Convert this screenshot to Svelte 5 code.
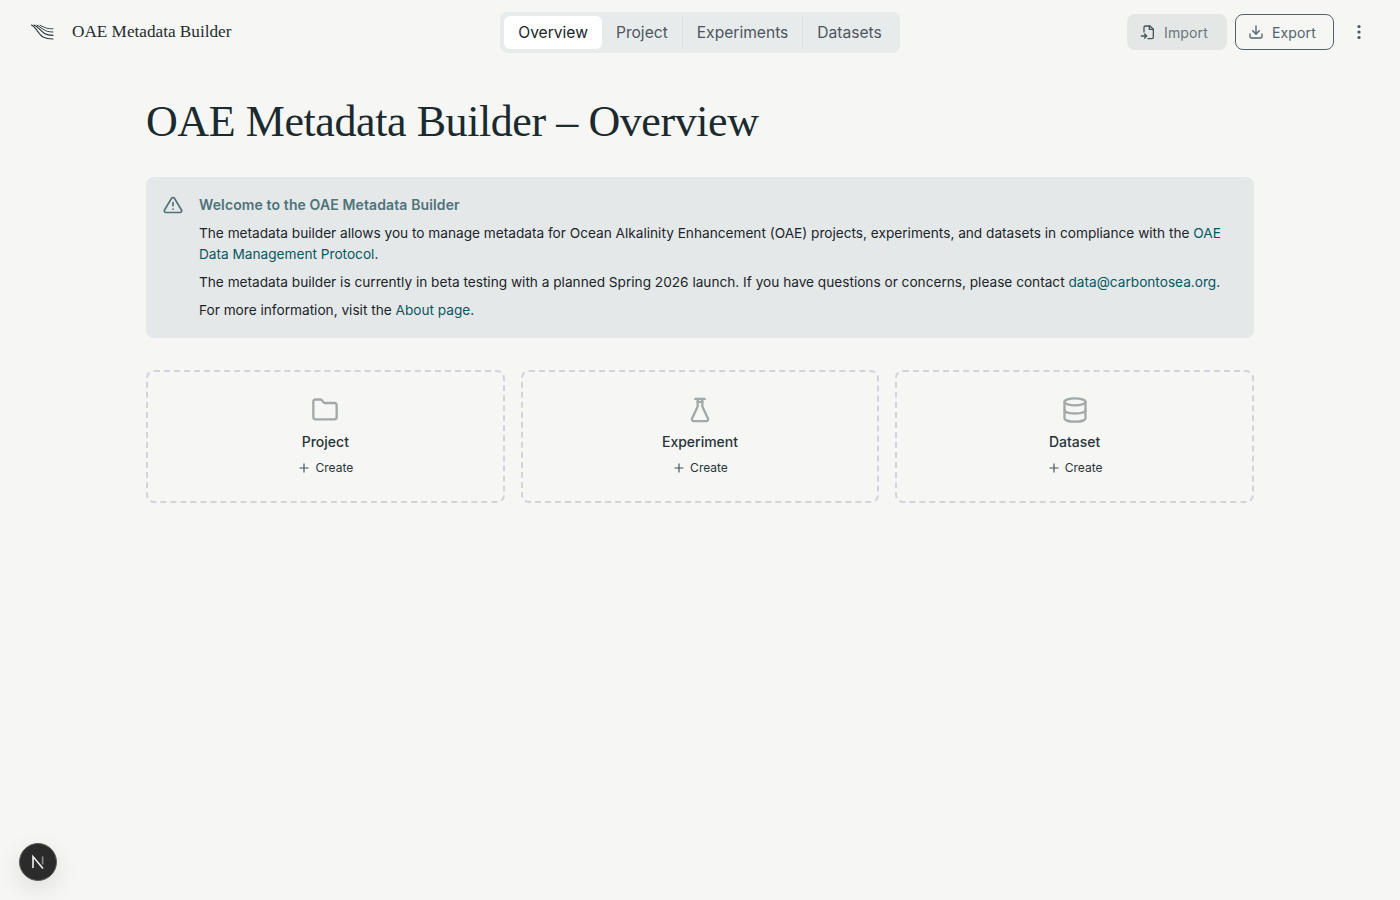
<script>
  const tabs = ['Overview', 'Project', 'Experiments', 'Datasets'];
  let activeTab = $state('Overview');

  const cards = [
    { name: 'Project', icon: 'folder' },
    { name: 'Experiment', icon: 'flask' },
    { name: 'Dataset', icon: 'database' }
  ];
</script>

<header class="topbar">
  <div class="brand">
    <svg class="logo" width="24" height="18" viewBox="0 0 24 18" fill="none" stroke="#27363a" stroke-linecap="round">
      <path d="M1.5 2C6 4 8 11 13 14C16 15.6 20 16 23 16" stroke-width="1.2" />
      <path d="M4 2C8 3.5 10.5 8 14.5 10.5C17 12 20 12.4 23 12.4" stroke-width="1.1" />
      <path d="M7 2.2C10 3.5 12 6 15.5 7.6C18 8.7 20.5 9 23 9" stroke-width="1" />
      <path d="M10 2.2C12 3.2 14 4.4 16.5 5.1C18.5 5.6 20.5 5.8 23 5.8" stroke-width="0.9" />
    </svg>
    <span class="brand-name">OAE Metadata Builder</span>
  </div>

  <nav class="tabs">
    {#each tabs as tab, i}
      {#if i > 1}<span class="divider"></span>{/if}
      <button class="tab" class:active={activeTab === tab} onclick={() => (activeTab = tab)}>{tab}</button>
    {/each}
  </nav>

  <div class="actions">
    <button class="btn import">
      <svg width="16" height="16" viewBox="0 0 24 24" fill="none" stroke="#45555a" stroke-width="2" stroke-linecap="round" stroke-linejoin="round">
        <path d="M6 12V5a2 2 0 0 1 2-2h7l5 5v12a2 2 0 0 1-2 2h-6" />
        <path d="M14 3v5h6" />
        <path d="M2 18h8M7 15l3 3-3 3" />
      </svg>
      Import
    </button>
    <button class="btn export">
      <svg width="16" height="16" viewBox="0 0 24 24" fill="none" stroke="currentColor" stroke-width="2" stroke-linecap="round" stroke-linejoin="round">
        <path d="M21 15v4a2 2 0 0 1-2 2H5a2 2 0 0 1-2-2v-4" />
        <path d="M7 10l5 5 5-5" />
        <path d="M12 15V3" />
      </svg>
      Export
    </button>
    <button class="more" aria-label="More">
      <svg width="20" height="20" viewBox="0 0 20 20" fill="#45555a">
        <circle cx="10" cy="4.5" r="1.6" />
        <circle cx="10" cy="10" r="1.6" />
        <circle cx="10" cy="15.5" r="1.6" />
      </svg>
    </button>
  </div>
</header>

<main class="page">
  <h1>OAE Metadata Builder – Overview</h1>

  <section class="alert">
    <svg class="alert-icon" width="20" height="20" viewBox="0 0 24 24" fill="none" stroke="#4f737a" stroke-width="2" stroke-linecap="round" stroke-linejoin="round">
      <path d="M10.3 3.9L1.8 18a2 2 0 0 0 1.7 3h17a2 2 0 0 0 1.7-3L13.7 3.9a2 2 0 0 0-3.4 0z" />
      <path d="M12 9v4M12 17h.01" />
    </svg>
    <div class="alert-body">
      <div class="alert-title">Welcome to the OAE Metadata Builder</div>
      <p>The metadata builder allows you to manage metadata for Ocean Alkalinity Enhancement (OAE) projects, experiments, and datasets in compliance with the <a href="#top">OAE Data Management Protocol</a>.</p>
      <p>The metadata builder is currently in beta testing with a planned Spring 2026 launch. If you have questions or concerns, please contact <a href="#top">data@carbontosea.org</a>.</p>
      <p>For more information, visit the <a href="#top">About page</a>.</p>
    </div>
  </section>

  <section class="cards">
    {#each cards as card}
      <button class="card">
        <svg class="card-icon" width="28" height="28" viewBox="0 0 24 24" fill="none" stroke="#a3a8a8" stroke-width="2" stroke-linecap="round" stroke-linejoin="round">
          {#if card.icon === 'folder'}
            <path d="M4 20h16a2 2 0 0 0 2-2V8a2 2 0 0 0-2-2h-7.9a2 2 0 0 1-1.7-.9l-.8-1.2A2 2 0 0 0 7.9 3H4a2 2 0 0 0-2 2v13a2 2 0 0 0 2 2z" />
          {:else if card.icon === 'flask'}
            <path d="M10 2.5v6.5L5.2 19.2A1.5 1.5 0 0 0 6.6 21.5h10.8a1.5 1.5 0 0 0 1.4-2.3L14 9V2.5" />
            <path d="M8 2.5h8M10 5h4" />
          {:else}
            <ellipse cx="12" cy="5" rx="9" ry="3" />
            <path d="M3 5v14c0 1.7 4 3 9 3s9-1.3 9-3V5" />
            <path d="M3 12c0 1.7 4 3 9 3s9-1.3 9-3" />
          {/if}
        </svg>
        <span class="card-name">{card.name}</span>
        <span class="card-create">
          <svg width="14" height="14" viewBox="0 0 24 24" fill="none" stroke="#45555a" stroke-width="2" stroke-linecap="round">
            <path d="M5 12h14M12 5v14" />
          </svg>
          Create
        </span>
      </button>
    {/each}
  </section>
</main>

<button class="dev-badge" aria-label="Next.js dev tools">
  <svg width="16" height="16" viewBox="0 0 16 16" fill="none">
    <path d="M3 14V2.6L13 14.4" stroke="#f2f2f2" stroke-width="1.6" />
    <path d="M12.6 2.5v8" stroke="#8f8f8f" stroke-width="1.6" />
  </svg>
</button>

<style>
  :global(body) {
    background: #f6f6f4;
    color: #1a2529;
    font-family: Inter, "Noto Sans", sans-serif;
    min-height: 900px;
  }

  button {
    font-family: inherit;
    cursor: pointer;
  }

  .topbar {
    height: 64px;
    padding: 0 24px;
    display: grid;
    grid-template-columns: 1fr auto 1fr;
    align-items: center;
  }

  .brand {
    display: flex;
    align-items: center;
    gap: 18px;
    margin-left: 6px;
  }

  .brand-name {
    font-family: "Liberation Serif", serif;
    font-size: 17.2px;
    color: #1f2c30;
  }

  .tabs {
    display: flex;
    align-items: center;
    background: #e7ebeb;
    border-radius: 8px;
    padding: 4px;
    height: 41px;
    box-sizing: border-box;
  }

  .tab {
    border: none;
    background: none;
    height: 33px;
    padding: 0 14px;
    border-radius: 6px;
    font-size: 15.6px;
    color: #4d5660;
  }

  .tab.active {
    background: #fff;
    color: #1a2529;
  }

  .divider {
    width: 1px;
    height: 33px;
    background: #dde1e4;
  }

  .actions {
    display: flex;
    align-items: center;
    justify-content: flex-end;
    gap: 8px;
  }

  .btn {
    height: 36px;
    display: inline-flex;
    align-items: center;
    gap: 8px;
    border-radius: 8px;
    font-size: 14px;
    letter-spacing: 0.15px;
  }

  .import {
    padding: 0 19px 0 13px;
    border: none;
    background: #e5e7e7;
    color: #66777c;
  }

  .export {
    padding: 0 17px 0 12px;
    border: 1px solid #4f646a;
    background: transparent;
    color: #4f646a;
  }

  .more {
    width: 34px;
    height: 36px;
    border: none;
    background: none;
    display: flex;
    align-items: center;
    justify-content: center;
    padding: 0;
  }

  .page {
    width: 1108px;
    margin: 0 auto;
  }

  h1 {
    margin: 35px 0 0;
    font-family: "Liberation Serif", serif;
    font-weight: 400;
    font-size: 44px;
    letter-spacing: -0.42px;
    line-height: 46px;
    color: #1a2a2e;
  }

  .alert {
    margin-top: 32px;
    background: #e5e8e9;
    border-radius: 8px;
    padding: 16px 16px 16px 17px;
    display: flex;
    gap: 16px;
    box-sizing: border-box;
    height: 161px;
  }

  .alert-icon {
    flex: none;
    margin-top: 2px;
  }

  .alert-title {
    font-size: 14px;
    font-weight: 600;
    letter-spacing: 0.12px;
    line-height: 24px;
    color: #4f737a;
  }

  .alert-body p {
    margin: 7px 0 0;
    font-size: 13.65px;
    line-height: 21px;
    color: #1a2529;
  }

  .alert-body p:first-of-type {
    margin-top: 6px;
  }

  a {
    color: #07575f;
    text-decoration: none;
  }

  .cards {
    margin-top: 32px;
    display: grid;
    grid-template-columns: repeat(3, 1fr);
    gap: 16px;
  }

  .card {
    height: 133px;
    border: 2px dashed #d1d5db;
    border-radius: 8px;
    background: none;
    color: #27343a;
    display: flex;
    flex-direction: column;
    align-items: center;
    padding: 24px 0 0;
  }

  .card-name {
    margin-top: 8px;
    font-size: 14px;
    font-weight: 500;
    line-height: 20px;
  }

  .card-create {
    margin-top: 8px;
    display: flex;
    align-items: center;
    gap: 4px;
    font-size: 12px;
    line-height: 16px;
    color: #29353a;
  }

  .dev-badge {
    position: fixed;
    left: 19px;
    bottom: 19px;
    width: 38px;
    height: 38px;
    border-radius: 50%;
    background: #2b2b2b;
    border: 1px solid #5c5c5c;
    box-shadow: 0 8px 24px rgba(0, 0, 0, 0.1);
    display: flex;
    align-items: center;
    justify-content: center;
    padding: 0;
  }
</style>
